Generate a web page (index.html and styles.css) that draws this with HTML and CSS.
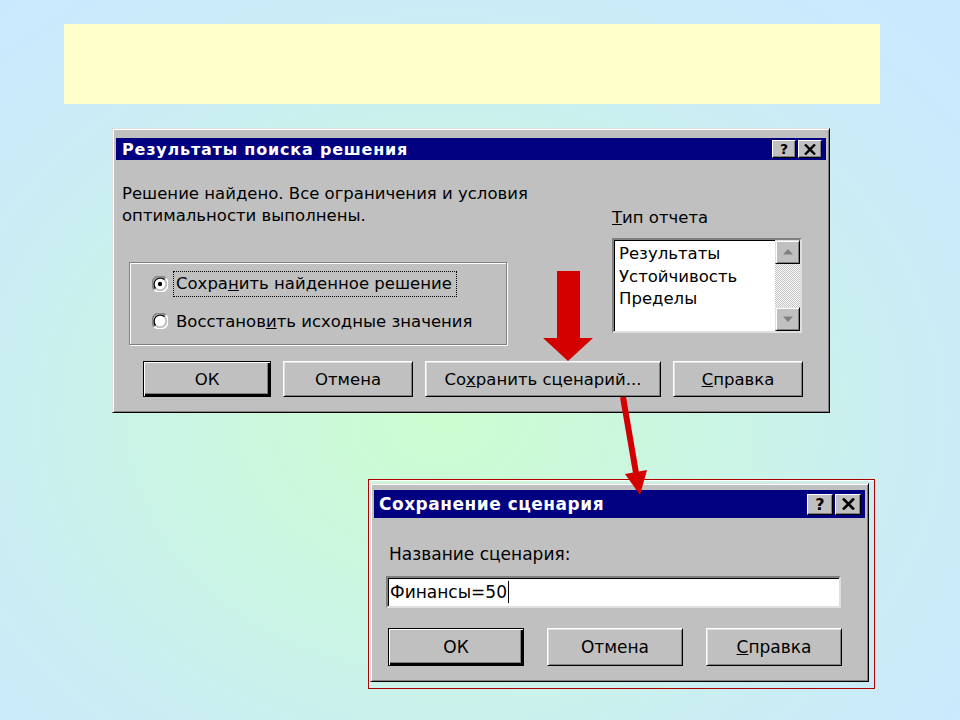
FILE: index.html
```html
<!DOCTYPE html>
<html lang="ru">
<head>
<meta charset="utf-8">
<title>Поиск решения</title>
<link rel="stylesheet" href="styles.css">
</head>
<body>
<div class="slide">
  <div class="banner"></div>

  <div class="dlg dlg-result">
    <div class="titlebar tb1">
      <span class="title">Результаты поиска решения</span>
      <div class="tb-btns">
        <span class="tb-btn">?</span>
        <span class="tb-btn"><svg width="12" height="11" viewBox="0 0 12 11"><path d="M1 0.5 L11 10.5 M11 0.5 L1 10.5" stroke="#000" stroke-width="2.4" fill="none"/></svg></span>
      </div>
    </div>
    <div class="body1">
      <div class="top-row">
        <div class="left-col">
          <p class="msg">Решение найдено. Все ограничения и условия<br>оптимальности выполнены.</p>
          <div class="group">
            <div class="radio-row">
              <svg class="radio" width="16" height="16" viewBox="0 0 16 16"><path d="M2.3 13.7 A8 8 0 0 1 13.7 2.3" stroke="#808080" stroke-width="1.6" fill="none"/><path d="M3.5 12.5 A6.4 6.4 0 0 1 12.5 3.5" stroke="#000" stroke-width="1.4" fill="none"/><path d="M13.7 2.3 A8 8 0 0 1 2.3 13.7" stroke="#fff" stroke-width="1.6" fill="none"/><circle cx="8" cy="8" r="5.2" fill="#fff"/><circle cx="8" cy="8" r="2.2" fill="#000"/></svg>
              <span class="focus">Сохра<u>н</u>ить найденное решение</span>
            </div>
            <div class="radio-row">
              <svg class="radio" width="16" height="16" viewBox="0 0 16 16"><path d="M2.3 13.7 A8 8 0 0 1 13.7 2.3" stroke="#808080" stroke-width="1.6" fill="none"/><path d="M3.5 12.5 A6.4 6.4 0 0 1 12.5 3.5" stroke="#000" stroke-width="1.4" fill="none"/><path d="M13.7 2.3 A8 8 0 0 1 2.3 13.7" stroke="#fff" stroke-width="1.6" fill="none"/><circle cx="8" cy="8" r="5.2" fill="#fff"/></svg>
              <span class="rtext">Восстанов<u>и</u>ть исходные значения</span>
            </div>
          </div>
        </div>
        <div class="right-col">
          <div class="list-label"><u>Т</u>ип отчета</div>
          <div class="listbox">
            <div class="items">
              <div>Результаты</div>
              <div>Устойчивость</div>
              <div>Пределы</div>
            </div>
            <div class="scrollbar">
              <span class="sbtn"><svg width="10" height="6" viewBox="0 0 10 6"><path d="M5 0 L10 5.5 L0 5.5 Z" fill="#808080"/></svg></span>
              <span class="track"></span>
              <span class="sbtn"><svg width="10" height="6" viewBox="0 0 10 6"><path d="M0 0.5 L10 0.5 L5 6 Z" fill="#808080"/></svg></span>
            </div>
          </div>
        </div>
      </div>
      <div class="btn-row row1">
        <span class="btn default b-ok">ОК</span>
        <span class="btn b-cancel">Отмена</span>
        <span class="btn b-save">Со<u>х</u>ранить сценарий...</span>
        <span class="btn b-help"><u>С</u>правка</span>
      </div>
    </div>
  </div>

  <div class="frame">
    <div class="dlg dlg-save">
      <div class="titlebar tb2">
        <span class="title">Сохранение сценария</span>
        <div class="tb-btns">
          <span class="tb-btn">?</span>
          <span class="tb-btn"><svg width="13" height="12" viewBox="0 0 13 12"><path d="M1 0.5 L12 11.5 M12 0.5 L1 11.5" stroke="#000" stroke-width="2.6" fill="none"/></svg></span>
        </div>
      </div>
      <div class="body2">
        <div class="name-label">Название сценария:</div>
        <div class="input">Финансы=50<span class="caret"></span></div>
        <div class="btn-row row2">
          <span class="btn default">ОК</span>
          <span class="btn">Отмена</span>
          <span class="btn"><u>С</u>правка</span>
        </div>
      </div>
    </div>
  </div>

  <svg class="arrows" width="960" height="720" viewBox="0 0 960 720">
    <polygon points="557,271 580,271 580,338 593,338 568,361 543,338 557,338" fill="#d40000"/>
    <line x1="623" y1="397" x2="636" y2="473" stroke="#d40000" stroke-width="6"/>
    <polygon points="625,474 647,470 640,495" fill="#d40000"/>
  </svg>
</div>
</body>
</html>
```

FILE: styles.css
```css
* { box-sizing: border-box; }
html, body { margin: 0; padding: 0; }
body {
  width: 960px;
  height: 720px;
  overflow: hidden;
  font-family: "DejaVu Sans", "Liberation Sans", sans-serif;
}
.slide {
  position: relative;
  width: 960px;
  height: 720px;
  padding-top: 24px;
  background: radial-gradient(ellipse 70% 75% at 46% 58%, #cbfdd0 0%, #cbf5e4 40%, #caedf4 70%, #c9e9fe 100%);
}
.banner {
  margin-left: 64px;
  width: 816px;
  height: 80px;
  background: #ffffcc;
}

/* windows */
.dlg {
  background: #c0c0c0;
  border: 1px solid;
  border-color: #dfdfdf #000 #000 #dfdfdf;
  box-shadow: inset 1px 1px #fff, inset -1px -1px #808080;
  color: #000;
}
.dlg-result {
  position: absolute;
  left: 112px;
  top: 128px;
  width: 718px;
  height: 285px;
  padding: 9px 3px 0 3px;
  font-size: 16.5px;
}
.titlebar {
  display: flex;
  align-items: center;
  justify-content: space-between;
  background: #000080;
  color: #fff;
  font-weight: bold;
}
.tb1 { height: 22px; padding: 0 4px 0 6px; font-size: 16px; letter-spacing: 0.8px; }
.tb2 { height: 28px; padding: 0 4px 0 5px; font-size: 17px; letter-spacing: 0.5px; }
.tb-btns { display: flex; gap: 2px; }
.tb-btn {
  display: flex;
  align-items: center;
  justify-content: center;
  background: #c0c0c0;
  color: #000;
  border: 1px solid;
  border-color: #fff #000 #000 #fff;
  box-shadow: inset -1px -1px #808080;
  font-family: "DejaVu Sans", sans-serif;
  font-weight: bold;
  letter-spacing: 0;
}
.tb1 .tb-btn { width: 24px; height: 18px; font-size: 14px; }
.tb2 .tb-btn { width: 26px; height: 21px; font-size: 16px; }

.body1 { padding: 0; }
.top-row { display: flex; }
.left-col { width: 496px; }
.msg {
  margin: 23px 0 0 6px;
  line-height: 22px;
  white-space: nowrap;
}
.group {
  margin: 35px 0 0 13px;
  width: 378px;
  height: 83px;
  border: 1px solid #808080;
  box-shadow: 1px 1px #fff, inset 1px 1px #fff;
  padding: 9px 0 0 22px;
  display: flex;
  flex-direction: column;
  gap: 13px;
}
.radio-row {
  display: flex;
  align-items: center;
  height: 24px;
  white-space: nowrap;
}
.radio { flex: none; margin-right: 6px; }
.focus {
  outline: 1px dotted #000;
  padding: 0 4px 0 2px;
  line-height: 24px;
}
.rtext { padding-left: 2px; }

.right-col { margin-left: 0; }
.list-label {
  margin-top: 47px;
  line-height: 22px;
  white-space: nowrap;
}
.listbox {
  margin-top: 9px;
  width: 190px;
  height: 95px;
  background: #fff;
  border: 2px solid;
  border-color: #808080 #dfdfdf #dfdfdf #808080;
  box-shadow: inset 1px 1px #000;
  display: flex;
}
.items {
  flex: 1;
  padding: 3px 0 0 5px;
  line-height: 22.5px;
}
.scrollbar {
  width: 25px;
  display: flex;
  flex-direction: column;
}
.sbtn {
  height: 24px;
  display: flex;
  align-items: center;
  justify-content: center;
  background: #c0c0c0;
  border: 1px solid;
  border-color: #dfdfdf #000 #000 #dfdfdf;
  box-shadow: inset 1px 1px #fff, inset -1px -1px #808080;
}
.track {
  flex: 1;
  background: repeating-conic-gradient(#c0c0c0 0 25%, #fff 0 50%) 0 0 / 2px 2px;
}

.btn-row { display: flex; }
.row1 { margin: 16px 0 0 27px; gap: 12px; }
.btn {
  display: flex;
  align-items: center;
  justify-content: center;
  height: 36px;
  background: #c0c0c0;
  border: 1px solid;
  border-color: #fff #000 #000 #fff;
  box-shadow: inset 1px 1px #dfdfdf, inset -1px -1px #808080;
  white-space: nowrap;
}
.btn.default {
  border: 1px solid #000;
  box-shadow: inset 1px 1px #fff, inset -2px -2px #000, inset -3px -3px #808080;
}
.b-ok { width: 128px; }
.b-cancel { width: 130px; }
.b-save { width: 236px; }
.b-help { width: 130px; }

/* second window */
.frame {
  position: absolute;
  left: 368px;
  top: 479px;
  width: 507px;
  height: 210px;
  border: 1px solid #b00000;
  box-shadow: inset 1px 1px #fff;
  padding: 3px 0 0 1px;
}
.dlg-save {
  width: 499px;
  height: 199px;
  padding: 6px 3px 0 3px;
  font-size: 17px;
}
.body2 { display: flex; flex-direction: column; }
.name-label {
  margin: 25px 0 0 15px;
  line-height: 22px;
}
.input {
  margin: 11px 0 0 12px;
  width: 455px;
  height: 32px;
  background: #fff;
  border: 2px solid;
  border-color: #808080 #dfdfdf #dfdfdf #808080;
  box-shadow: inset 1px 1px #000;
  display: flex;
  align-items: center;
  padding-left: 2px;
}
.caret {
  display: inline-block;
  width: 1px;
  height: 22px;
  background: #000;
  margin-left: 1px;
}
.row2 { margin: 20px 0 0 14px; gap: 23px; }
.row2 .btn { width: 136px; height: 38px; }

.arrows {
  position: absolute;
  left: 0;
  top: 0;
  pointer-events: none;
}
```
